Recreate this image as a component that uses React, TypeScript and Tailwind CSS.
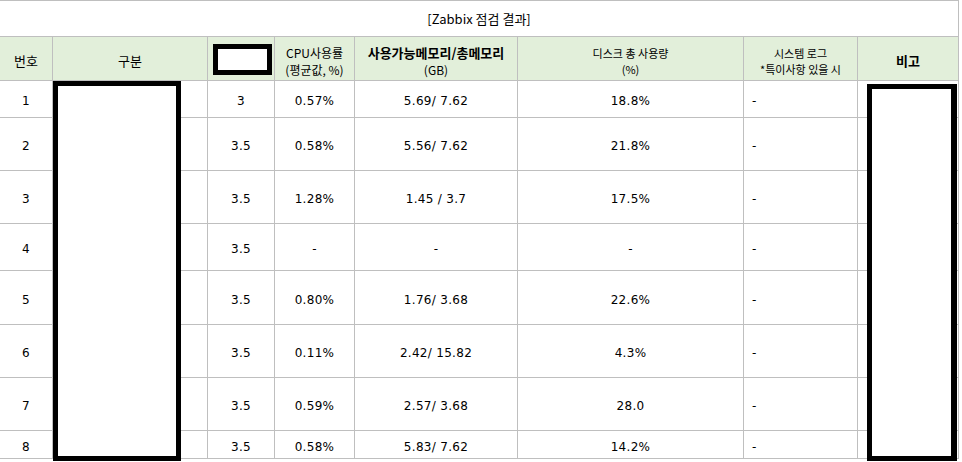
import React from "react";

type Row = {
  no: string;
  ver: string;
  cpu: string;
  mem: string;
  disk: string;
  log: string;
};

const rows: Row[] = [
  { no: "1", ver: "3", cpu: "0.57%", mem: "5.69/ 7.62", disk: "18.8%", log: "-" },
  { no: "2", ver: "3.5", cpu: "0.58%", mem: "5.56/ 7.62", disk: "21.8%", log: "-" },
  { no: "3", ver: "3.5", cpu: "1.28%", mem: "1.45 / 3.7", disk: "17.5%", log: "-" },
  { no: "4", ver: "3.5", cpu: "-", mem: "-", disk: "-", log: "-" },
  { no: "5", ver: "3.5", cpu: "0.80%", mem: "1.76/ 3.68", disk: "22.6%", log: "-" },
  { no: "6", ver: "3.5", cpu: "0.11%", mem: "2.42/ 15.82", disk: "4.3%", log: "-" },
  { no: "7", ver: "3.5", cpu: "0.59%", mem: "2.57/ 3.68", disk: "28.0", log: "-" },
  { no: "8", ver: "3.5", cpu: "0.58%", mem: "5.83/ 7.62", disk: "14.2%", log: "-" },
];

function Cell({ children, className = "" }: { children?: React.ReactNode; className?: string }) {
  return <div className={`bg-white flex items-center justify-center ${className}`}>{children}</div>;
}

function Head({ children, className = "" }: { children?: React.ReactNode; className?: string }) {
  return (
    <div className={`bg-[#e2efda] flex flex-col items-center justify-center text-center pt-1 ${className}`}>
      {children}
    </div>
  );
}

export default function App() {
  return (
    <div className="w-[962px] h-[462px] bg-white overflow-hidden text-black font-['DejaVu_Sans','Noto_Sans_CJK_KR',sans-serif] text-[12px] tracking-[0.3px]">
      <div className="relative w-[959px]">
        {/* the sheet itself, gray lines come from the 1px gaps */}
        <div className="grid grid-cols-[52px_154px_66px_79px_162px_225px_113px_100px] grid-rows-[35px_43px_36px_52px_52px_46px_53px_52px_52px_27px] gap-px bg-[#bfbfbf] pt-px pr-px pb-px">
          <Cell className="col-span-8 pt-px text-[13px] tracking-normal font-['Noto_Sans_CJK_KR',sans-serif]">[Zabbix 점검 결과]</Cell>

          <Head className="text-[13px] tracking-normal font-['Noto_Sans_CJK_KR',sans-serif]">번호</Head>
          <Head className="text-[13px] tracking-normal font-['Noto_Sans_CJK_KR',sans-serif]">구분</Head>
          <Head />
          <Head className="text-[12px] leading-[17px] tracking-normal font-['Noto_Sans_CJK_KR',sans-serif]">
            <span>CPU사용률</span>
            <span>(평균값, %)</span>
          </Head>
          <Head className="text-[12px] leading-[17px] tracking-normal font-['Noto_Sans_CJK_KR',sans-serif]">
            <span className="text-[13px] font-semibold">사용가능메모리/총메모리</span>
            <span>(GB)</span>
          </Head>
          <Head className="text-[11px] leading-[16px] tracking-normal font-['Noto_Sans_CJK_KR',sans-serif]">
            <span>디스크 총 사용량</span>
            <span>(%)</span>
          </Head>
          <Head className="text-[11px] leading-[16px] tracking-normal font-['Noto_Sans_CJK_KR',sans-serif]">
            <span>시스템 로그</span>
            <span>*특이사항 있을 시</span>
          </Head>
          <Head className="text-[13px] font-bold tracking-normal font-['Noto_Sans_CJK_KR',sans-serif]">비고</Head>

          {rows.map((r) => (
            <React.Fragment key={r.no}>
              <Cell className="pt-1">{r.no}</Cell>
              <Cell />
              <Cell className="pt-1">{r.ver}</Cell>
              <Cell className="pt-1">{r.cpu}</Cell>
              <Cell className="pt-1">{r.mem}</Cell>
              <Cell className="pt-1">{r.disk}</Cell>
              <Cell className="pt-1 justify-start pl-2">{r.log}</Cell>
              <Cell />
            </React.Fragment>
          ))}
        </div>

        {/* redaction boxes drawn over the sheet */}
        <div className="absolute left-[213px] top-[44px] w-[59px] h-[31px] border-[5px] border-black bg-white" />
        <div className="absolute left-[53px] top-[81px] w-[128px] h-[380px] border-[5px] border-black bg-white" />
        <div className="absolute left-[867px] top-[84px] w-[90px] h-[377px] border-[5px] border-r-[6px] border-black bg-white" />
      </div>
    </div>
  );
}
